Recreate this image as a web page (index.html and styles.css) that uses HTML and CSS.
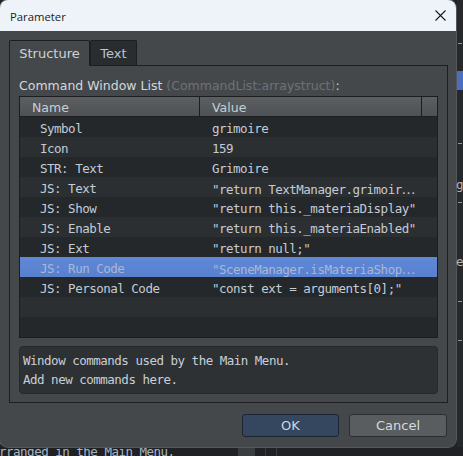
FILE: index.html
```html
<!DOCTYPE html>
<html>
<head>
  <title>Parameter</title>
  <link rel="stylesheet" href="styles.css">
</head>
<body>
  <div class="screen">
    <div class="top">
      <div class="dialog">
        <div class="titlebar">
          <span class="title">Parameter</span>
          <svg class="close" width="11" height="11" viewBox="0 0 11 11">
            <path d="M0.5 0.5 L10.5 10.5 M10.5 0.5 L0.5 10.5" stroke="#1a1a1a" stroke-width="1.1" fill="none"/>
          </svg>
        </div>
        <div class="content">
          <div class="tabs">
            <div class="tab active">Structure</div>
            <div class="tab tab-text">Text</div>
          </div>
          <div class="panel">
            <div class="field-label">Command Window List <span class="dim">(CommandList:arraystruct)</span>:</div>
            <div class="grid">
              <div class="grid-head">
                <div class="hcell name">Name</div>
                <div class="hcell value">Value</div>
                <div class="hcell gutter"></div>
              </div>
              <div class="grid-body">
                <div class="row"><div class="cell name">Symbol</div><div class="cell value">grimoire</div></div>
                <div class="row"><div class="cell name">Icon</div><div class="cell value">159</div></div>
                <div class="row"><div class="cell name">STR: Text</div><div class="cell value">Grimoire</div></div>
                <div class="row"><div class="cell name">JS: Text</div><div class="cell value">"return TextManager.grimoir<span class="more">…</span></div></div>
                <div class="row"><div class="cell name">JS: Show</div><div class="cell value">"return this._materiaDisplay"</div></div>
                <div class="row"><div class="cell name">JS: Enable</div><div class="cell value">"return this._materiaEnabled"</div></div>
                <div class="row"><div class="cell name">JS: Ext</div><div class="cell value">"return null;"</div></div>
                <div class="row selected"><div class="cell name">JS: Run Code</div><div class="cell value">"SceneManager.isMateriaShop<span class="more">…</span></div></div>
                <div class="row"><div class="cell name">JS: Personal Code</div><div class="cell value">"const ext = arguments[0];"</div></div>
                <div class="row"></div>
                <div class="row"></div>
              </div>
            </div>
            <div class="desc">Window commands used by the Main Menu.<br>Add new commands here.</div>
          </div>
          <div class="buttons">
            <button class="btn ok">OK</button>
            <button class="btn cancel">Cancel</button>
          </div>
        </div>
      </div>
      <!-- edge of the editor window behind the dialog -->
      <div class="side">
        <div class="dash d1"></div>
        <div class="blue"></div>
        <div class="dash d2"></div>
        <div class="glyph g1">g</div>
        <div class="dash d3"></div>
        <div class="glyph g2">e</div>
        <div class="dash d4"></div>
        <div class="dash d5"></div>
      </div>
    </div>
    <div class="under">
      <span class="under-text">rranged in the Main Menu.</span>
      <div class="bar"></div>
      <div class="col"></div>
      <div class="col"></div>
      <div class="col"></div>
    </div>
  </div>
</body>
</html>
```

FILE: styles.css
```css
* {
  box-sizing: border-box;
}
body {
  margin: 0;
  background: #1f2124;
  font-family: "DejaVu Sans", sans-serif;
  overflow: hidden;
}
.screen {
  width: 463px;
  height: 456px;
}
.top {
  display: flex;
  height: 447px;
  position: relative;
  z-index: 1;
}

/* dialog window */
.dialog {
  width: 457px;
  height: 447px;
  background: #45484b;
  border-radius: 8px;
  overflow: hidden;
  box-shadow: 0 0 0 1px #55585b;
  display: flex;
  flex-direction: column;
}
.titlebar {
  height: 31px;
  background: #eef3f9;
  display: flex;
  align-items: center;
  justify-content: space-between;
  padding: 0 10px 0 10px;
}
.title {
  font-family: "Open Sans", sans-serif;
  font-size: 11.3px;
  color: #1b1b1b;
  padding-top: 1px;
}
.close {
  display: block;
}
.content {
  padding: 9px 8px 0 9px;
}

/* tabs */
.tabs {
  display: flex;
  height: 25px;
}
.tab {
  height: 25px;
  width: 81px;
  border: 1px solid #1c1e20;
  border-bottom: none;
  border-radius: 2px 2px 0 0;
  text-align: center;
  font-size: 13px;
  line-height: 17px;
  padding-top: 4px;
  color: #b9c5d2;
  background: #2a2d30;
}
.tab.active {
  height: 26px;
  background: #45484b;
  color: #cdd3d9;
  position: relative;
  z-index: 1;
}
.tab-text {
  width: 47px;
  margin-left: 0;
}

/* tab page */
.panel {
  height: 338px;
  border: 1px solid #1c1e20;
  padding: 10px 9px 9px 9px;
}
.field-label {
  height: 18px;
  line-height: 16px;
  padding-top: 2px;
  font-size: 12.5px;
  color: #d3d9df;
  margin-bottom: 2px;
  white-space: nowrap;
}
.dim {
  color: #6d7276;
}

/* list grid */
.grid {
  border: 1px solid #1b1d1f;
  background: #2c2f32;
}
.grid-head {
  display: flex;
  height: 20px;
  border-bottom: 1px solid #1b1d1f;
  background: linear-gradient(#5b5f62, #4e5255);
}
.hcell {
  font-size: 12.5px;
  line-height: 17px;
  padding-top: 2px;
  color: #c7ced6;
  border-right: 1px solid #1b1d1f;
}
.hcell.name {
  width: 180px;
  padding-left: 12px;
}
.hcell.value {
  width: 222px;
  padding-left: 12px;
}
.hcell.gutter {
  flex: 1;
  border-right: none;
}
.row {
  display: flex;
  height: 20px;
  background: #2c2f32;
  font-family: "DejaVu Sans Mono", monospace;
  font-size: 12.5px;
  letter-spacing: -0.5px;
  line-height: 16px;
  color: #c3ccd6;
}
.row:nth-child(odd) {
  background: #25282b;
}
.row.selected {
  background: linear-gradient(#5f88d7, #5880cf);
  color: #a9b8d3;
}
.cell {
  padding-top: 4px;
  white-space: nowrap;
  overflow: hidden;
}
.cell.name {
  width: 180px;
  padding-left: 20px;
}
.cell.value {
  width: 222px;
  padding-left: 12px;
}
.more {
  font-family: "Noto Sans CJK JP", sans-serif;
  letter-spacing: 1px;
}

/* help text */
.desc {
  margin-top: 8px;
  height: 48px;
  border: 1px solid #26292c;
  border-radius: 4px;
  background: #2e3134;
  padding: 4px 3px 3px 3px;
  font-family: "DejaVu Sans Mono", monospace;
  font-size: 12.5px;
  letter-spacing: -0.5px;
  line-height: 19px;
  color: #c7cfd8;
}

/* buttons */
.buttons {
  display: flex;
  justify-content: flex-end;
  gap: 10px;
  margin-top: 11px;
  padding-right: 1px;
}
.btn {
  height: 23px;
  border-radius: 3px;
  font-family: "DejaVu Sans", sans-serif;
  font-size: 13px;
  line-height: 21px;
  padding: 0;
}
.btn.ok {
  width: 97px;
  background: #35475f;
  border: 1px solid #1c2534;
  color: #cfd6df;
}
.btn.cancel {
  width: 98px;
  background: #5a5d60;
  border: 1px solid #2c2e30;
  color: #d6dadd;
}

/* background editor pieces */
.side {
  width: 6px;
  display: flex;
  flex-direction: column;
  background: #26282b;
  margin-left: 1px;
}
.dash {
  height: 1px;
  width: 4px;
  margin-left: 1px;
  background: #8e969e;
}
.d1 { margin-top: 43px; }
.blue {
  margin-top: 27px;
  height: 19px;
  background: #4a6fc1;
}
.d2 { margin-top: 53px; }
.glyph {
  font-family: "DejaVu Sans Mono", monospace;
  font-size: 12.5px;
  line-height: 14px;
  height: 14px;
  color: #aeb6bf;
  margin-left: -1px;
  overflow: hidden;
}
.g1 { margin-top: 34px; }
.d3 { margin-top: 10px; }
.g2 { margin-top: 52px; }
.d4 { margin-top: 32px; }
.d5 { margin-top: 38px; }
.under {
  display: flex;
  height: 12px;
  margin-top: -3px;
}
.under-text {
  width: 239px;
  font-family: "DejaVu Sans Mono", monospace;
  font-size: 12.5px;
  letter-spacing: -0.5px;
  line-height: 16px;
  color: #a9b5c4;
  white-space: nowrap;
  margin-left: -1px;
}
.bar {
  width: 16px;
  background: #3a3d40;
}
.col {
  width: 11px;
  border-left: 1px solid #3a3d40;
}
```
